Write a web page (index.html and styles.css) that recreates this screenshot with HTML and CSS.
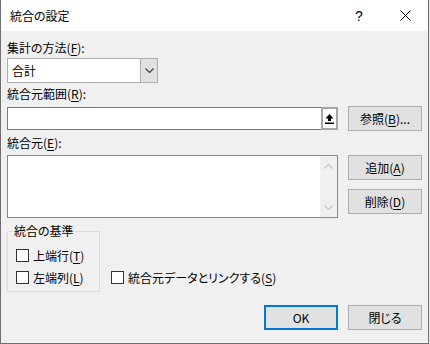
FILE: index.html
```html
<!DOCTYPE html>
<html lang="ja">
<head>
    <meta charset="UTF-8">
    <title>統合の設定</title>
    <link rel="stylesheet" href="styles.css">
</head>
<body>
    <div class="dialog">
        <div class="titlebar">
            <span class="title">統合の設定</span>
            <div class="caption-btns">
                <span class="cap-btn help">?</span>
                <span class="cap-btn">
                    <svg width="11" height="11" viewBox="0 0 11 11"><path d="M0.5 0.5 L10.5 10.5 M10.5 0.5 L0.5 10.5" stroke="#000" stroke-width="1" fill="none"/></svg>
                </span>
            </div>
        </div>

        <div class="content">
            <div class="field-label">集計の方法(<u>F</u>):</div>
            <div class="combo">
                <span class="combo-value">合計</span>
                <span class="combo-arrow">
                    <svg width="9" height="5" viewBox="0 0 9 5"><path d="M0.5 0.5 L4.5 4.5 L8.5 0.5" stroke="#444" stroke-width="1.2" fill="none"/></svg>
                </span>
            </div>

            <div class="field-label">統合元範囲(<u>R</u>):</div>
            <div class="row">
                <div class="ref-box">
                    <div class="ref-text"></div>
                    <span class="collapse-btn">
                        <svg width="9" height="10" viewBox="0 0 9 10"><path d="M4.5 0 L8.5 4.5 L6 4.5 L6 7 L3 7 L3 4.5 L0.5 4.5 Z" fill="#000"/><rect x="0" y="8.5" width="9" height="1.5" fill="#000"/></svg>
                    </span>
                </div>
                <button class="btn">参照(<u>B</u>)...</button>
            </div>

            <div class="field-label">統合元(<u>E</u>):</div>
            <div class="row">
                <div class="listbox">
                    <div class="list-items"></div>
                    <div class="scrollbar">
                        <svg width="9" height="5" viewBox="0 0 9 5"><path d="M0.5 4.5 L4.5 0.5 L8.5 4.5" stroke="#c2c2c2" stroke-width="1.1" fill="none"/></svg>
                        <svg width="9" height="5" viewBox="0 0 9 5"><path d="M0.5 0.5 L4.5 4.5 L8.5 0.5" stroke="#c2c2c2" stroke-width="1.1" fill="none"/></svg>
                    </div>
                </div>
                <div class="side-btns">
                    <button class="btn">追加(<u>A</u>)</button>
                    <button class="btn">削除(<u>D</u>)</button>
                </div>
            </div>

            <div class="options">
                <fieldset class="group">
                    <legend>統合の基準</legend>
                    <label class="check"><span class="box"></span><span>上端行(<u>T</u>)</span></label>
                    <label class="check"><span class="box"></span><span>左端列(<u>L</u>)</span></label>
                </fieldset>
                <label class="check link-check"><span class="box"></span><span>統合元データとリンクする(<u>S</u>)</span></label>
            </div>

            <div class="footer">
                <button class="btn default">OK</button>
                <button class="btn">閉じる</button>
            </div>
        </div>
    </div>
</body>
</html>
```

FILE: styles.css
```css
body {
    margin: 0;
    background-color: #e8e8e8;
    font-family: "Noto Sans CJK JP", "Noto Sans", sans-serif;
    font-size: 12px;
    font-feature-settings: "palt";
    color: #000;
}

u {
    text-decoration-thickness: 1px;
    text-underline-offset: 2px;
}

.dialog {
    width: 429px;
    height: 344px;
    box-sizing: border-box;
    background-color: #f0f0f0;
    border: 1px solid #6f6f6f;
    border-top: none;
}

.titlebar {
    height: 31px;
    background-color: #fff;
    display: flex;
    align-items: center;
    justify-content: space-between;
}

.title {
    padding-left: 9px;
    line-height: 16px;
}

.caption-btns {
    display: flex;
    height: 100%;
}

.cap-btn {
    width: 46px;
    display: flex;
    align-items: center;
    justify-content: center;
}

.help {
    font-family: "Liberation Sans", sans-serif;
    font-size: 14px;
    padding-top: 1px;
}

.content {
    padding: 0 6px;
}

.field-label {
    line-height: 16px;
    margin-top: 9px;
    height: 16px;
}

.field-label + .combo {
    margin-top: 2px;
}

.combo {
    width: 151px;
    height: 25px;
    box-sizing: border-box;
    border: 1px solid #adadad;
    background-color: #fff;
    display: flex;
    justify-content: space-between;
}

.combo-value {
    padding-left: 4px;
    line-height: 23px;
}

.combo-arrow {
    width: 16px;
    background-color: #e1e1e1;
    border-left: 1px solid #adadad;
    display: flex;
    align-items: center;
    justify-content: center;
}

.combo + .field-label {
    margin-top: 3px;
}

.row {
    display: flex;
    justify-content: space-between;
    margin-top: 4px;
}

.ref-box {
    width: 331px;
    height: 23px;
    margin-top: 1px;
    display: flex;
}

.ref-text {
    flex: 1;
    background-color: #fff;
    border: 1px solid #7a7a7a;
    border-right: none;
}

.collapse-btn {
    width: 17px;
    box-sizing: border-box;
    border: 2px solid #a6a6a6;
    background-color: #fff;
    display: flex;
    align-items: center;
    justify-content: center;
}

.btn {
    width: 74px;
    height: 25px;
    padding: 0;
    background-color: #e1e1e1;
    border: 1px solid #adadad;
    font: inherit;
    color: #000;
    line-height: 16px;
}

.row + .field-label {
    margin-top: 4px;
}

.listbox {
    width: 331px;
    height: 63px;
    box-sizing: border-box;
    border: 1px solid #828790;
    background-color: #fff;
    display: flex;
}

.list-items {
    flex: 1;
}

.scrollbar {
    width: 17px;
    background-color: #f0f0f0;
    display: flex;
    flex-direction: column;
    align-items: center;
    justify-content: space-between;
    padding: 8px 0 7px;
}

.side-btns {
    display: flex;
    flex-direction: column;
    gap: 9px;
}

.options {
    display: flex;
    align-items: flex-end;
    margin-top: 5px;
}

.group {
    margin: 0;
    width: 93px;
    box-sizing: border-box;
    border: 1px solid #dcdcdc;
    padding: 10px 0 7px 8px;
    display: flex;
    flex-direction: column;
    gap: 9px;
}

.group legend {
    padding: 0 1px;
    margin-left: -3px;
    line-height: 16px;
}

.check {
    display: flex;
    align-items: center;
    gap: 4px;
    height: 13px;
    line-height: 13px;
    white-space: nowrap;
}

.box {
    width: 13px;
    height: 13px;
    box-sizing: border-box;
    border: 1px solid #333;
    background-color: #fff;
}

.link-check {
    margin: 0 0 8px 11px;
}

.footer {
    display: flex;
    justify-content: flex-end;
    gap: 10px;
    margin-top: 13px;
}

.default {
    border: 2px solid #0078d7;
}
```
